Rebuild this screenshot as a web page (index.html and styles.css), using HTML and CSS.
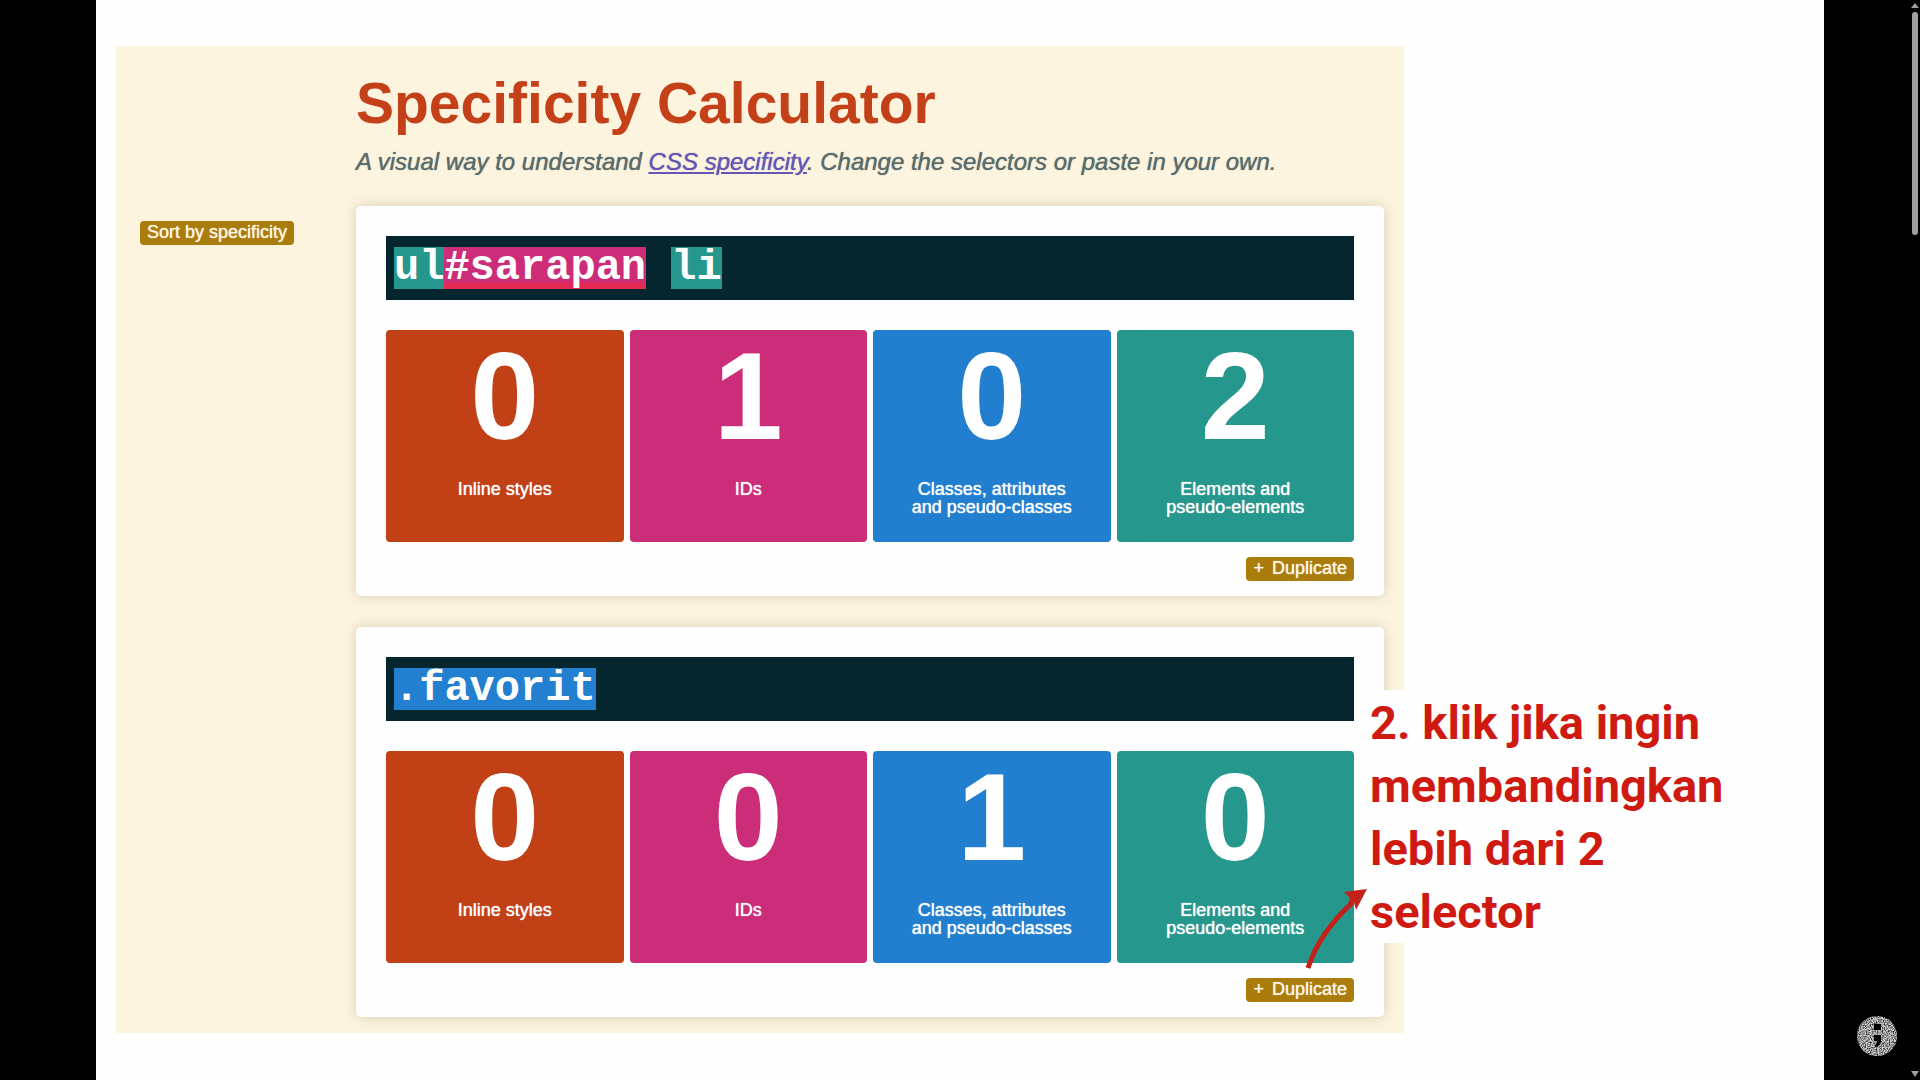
FILE: index.html
```html
<!DOCTYPE html>
<html lang="id">
<head>
<meta charset="utf-8">
<title>Specificity Calculator</title>
<link rel="stylesheet" href="styles.css">
</head>
<body>
<main class="slide">
  <div class="stage">
    <section class="calculator">
      <header class="intro">
        <h1 class="title">Specificity Calculator</h1>
        <p class="tagline">A visual way to understand <a class="tagline-link" href="#">CSS specificity</a>. Change the selectors or paste in your own.</p>
      </header>
      <div class="tools">
        <button class="button" type="button">Sort by specificity</button>
      </div>
      <div class="cards">
        <article class="card">
          <input class="selector selector-first" type="text" value="ul#sarapan li" aria-label="Selector 1" spellcheck="false">
          <div class="scores">
            <div class="score score-inline"><strong class="score-value">0</strong><span class="score-label">Inline styles</span></div>
            <div class="score score-id"><strong class="score-value">1</strong><span class="score-label">IDs</span></div>
            <div class="score score-class"><strong class="score-value">0</strong><span class="score-label">Classes, attributes<br>and pseudo-classes</span></div>
            <div class="score score-element"><strong class="score-value">2</strong><span class="score-label">Elements and<br>pseudo-elements</span></div>
          </div>
          <button class="button card-action" type="button"><span>+</span><span>Duplicate</span></button>
        </article>
        <article class="card">
          <input class="selector selector-second" type="text" value=".favorit" aria-label="Selector 2" spellcheck="false">
          <div class="scores">
            <div class="score score-inline"><strong class="score-value">0</strong><span class="score-label">Inline styles</span></div>
            <div class="score score-id"><strong class="score-value">0</strong><span class="score-label">IDs</span></div>
            <div class="score score-class"><strong class="score-value">1</strong><span class="score-label">Classes, attributes<br>and pseudo-classes</span></div>
            <div class="score score-element"><strong class="score-value">0</strong><span class="score-label">Elements and<br>pseudo-elements</span></div>
          </div>
          <button class="button card-action" type="button"><span>+</span><span>Duplicate</span></button>
        </article>
      </div>
      <p class="note">2. klik jika ingin<br>membandingkan<br>lebih dari 2<br>selector</p>
      <svg class="note-arrow" width="64" height="84" viewBox="0 0 64 84" aria-hidden="true">
        <path d="M4 81C12 56 27 35 49 15" fill="none" stroke="#c3211a" stroke-width="5"/>
        <path d="M63 2L40 5L46 11L44 17L50 15L52 23Z" fill="#c3211a"/>
      </svg>
    </section>
  </div>
</main>
<svg class="badge" viewBox="0 0 40 40" aria-hidden="true">
  <defs>
    <filter id="grain" x="0" y="0" width="100%" height="100%">
      <feTurbulence type="fractalNoise" baseFrequency="0.83" numOctaves="1" seed="9"/>
      <feColorMatrix values="0 0 0 0 .6  0 0 0 0 .6  0 0 0 0 .6  3 0 0 0 -.8"/>
    </filter>
    <clipPath id="disc"><circle cx="20" cy="20" r="20"/></clipPath>
  </defs>
  <g clip-path="url(#disc)">
    <rect width="40" height="40" fill="#222"/>
    <rect width="40" height="40" filter="url(#grain)"/>
  </g>
  <path d="M17 8h7v6h-7zM17 19h7v6q0 5-6 6v-2q2-1 2-4h-3z" fill="#000"/>
</svg>
<div class="scrollbar" aria-hidden="true">
  <svg class="scroll-arrow" viewBox="0 0 8 6"><path d="M4 0L8 5H0Z"/></svg>
  <span class="scroll-thumb"></span>
  <svg class="scroll-arrow scroll-arrow-down" viewBox="0 0 8 6"><path d="M0 0H8L4 6Z"/></svg>
</div>
</body>
</html>
```
FILE: styles.css
```css
* { box-sizing: border-box; }

body {
  margin: 0;
  background: #000;
  font-family: "Liberation Sans", Arial, sans-serif;
}

.slide {
  min-height: 100vh;
  margin: 0 5%;
  padding: 46px 20px;
  background: #fefefe;
}

.stage {
  display: grid;
  grid-template-columns: 1288fr 400fr;
}

.calculator {
  position: relative;
  display: grid;
  grid-template-columns: 216px minmax(0, 1fr);
  padding: 25px 20px 16px 24px;
  background: #fcf4df;
}

.intro { grid-column: 2; margin-bottom: 30px; }

.title {
  margin: 0 0 13px;
  color: #c44019;
  font-size: 57px;
  line-height: 64px;
}

.tagline {
  margin: 0;
  color: #5b6b6b;
  font-size: 24px;
  font-style: italic;
  line-height: 28px;
  text-shadow: 0 0 1px currentColor;
}

.tagline-link { color: #6457b4; }

.tools { padding-top: 15px; }

.button {
  display: flex;
  gap: 8px;
  padding: 0 7px 2px;
  border: 0;
  border-radius: 4px;
  background: #aa7c0c;
  color: #fff6e4;
  font: 18px/22px "Liberation Sans", Arial, sans-serif;
  text-shadow: 0 0 1px currentColor;
}

.cards { display: grid; gap: 31px; }

.card {
  padding: 30px 30px 15px;
  border-radius: 5px;
  background: #fefefe;
  box-shadow: 0 0 12px rgba(110, 90, 50, .25);
}

/* Each kind of simple selector is tinted behind its characters */
.selector {
  display: block;
  width: 100%;
  height: 64px;
  padding: 11px 8px;
  border: 0;
  background-color: #05252f;
  background-origin: content-box;
  background-repeat: no-repeat;
  color: #fff;
  font: bold 42px/42px "Liberation Mono", "Courier New", monospace;
}

.selector-first {
  background-image:
    linear-gradient(to top, #e62a4c, #dc2b60),
    linear-gradient(to right, #26978c 2ch, #cd2c78 2ch 10ch, transparent 10ch 11ch, #26978c 11ch 13ch, transparent 13ch);
  background-position: 2ch 100%, 0 0;
  background-size: 8ch 7px, 100% 100%;
}

.selector-second {
  background-image: linear-gradient(to right, #2380d0 8ch, transparent 8ch);
}

.scores {
  display: grid;
  grid-template-columns: repeat(4, 1fr);
  gap: 6px;
  margin: 30px 0 15px;
}

.score {
  display: flex;
  flex-direction: column;
  gap: 22px;
  padding: 4px 0 26px;
  border-radius: 4px;
  color: #fff;
  text-align: center;
}

.score-inline { background: #c24016; }
.score-id { background: #cc2d78; }
.score-class { background: #227fcf; }
.score-element { background: #26978c; }

.score-value { font-size: 124px; line-height: 124px; }

.score-label {
  font-size: 18px;
  line-height: 18px;
  text-shadow: 0 0 1px currentColor;
}

.card-action { margin-left: auto; }

/* Callout laid over the right edge of the calculator */
.note {
  position: absolute;
  top: 644px;
  left: calc(100% - 42px);
  margin: 0;
  padding: 1px 8px 0;
  background: #fefefe;
  color: #cf1a12;
  font: bold 47px/63px Roboto, "Liberation Sans", sans-serif;
  white-space: nowrap;
}

.note-arrow {
  position: absolute;
  top: 841px;
  left: calc(100% - 100px);
}

.badge {
  position: fixed;
  right: 23px;
  bottom: 24px;
  width: 40px;
  height: 40px;
}

.scrollbar {
  position: fixed;
  top: 0;
  right: 1px;
  bottom: 0;
  display: flex;
  flex-direction: column;
  align-items: center;
  width: 8px;
  padding: 3px 0;
}

.scroll-arrow { width: 8px; height: 6px; fill: #9f9f9f; }
.scroll-arrow-down { margin-top: auto; }

.scroll-thumb {
  width: 6px;
  height: 223px;
  margin-top: 3px;
  border-radius: 3px;
  background: #9f9f9f;
}
```
